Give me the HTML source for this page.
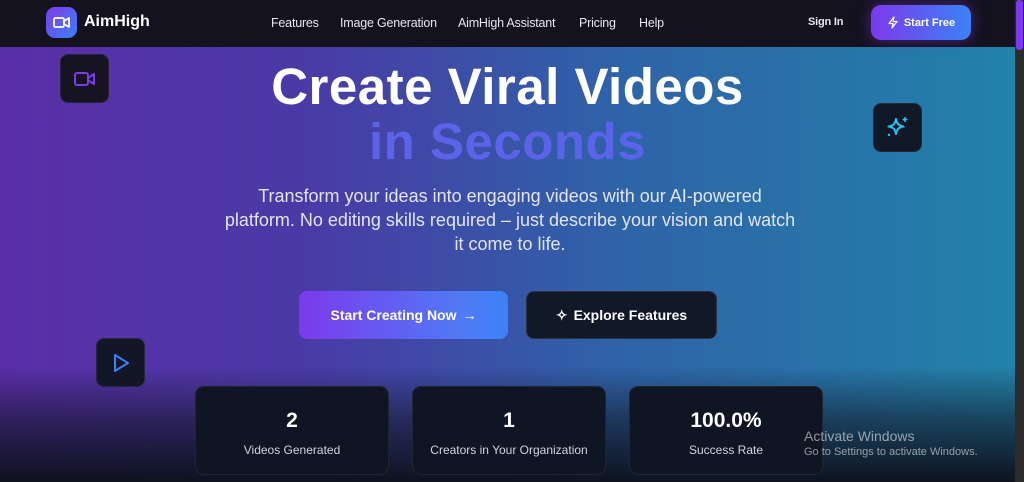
<!DOCTYPE html>
<html><head><meta charset="utf-8"><style>
*{margin:0;padding:0;box-sizing:border-box}
body{width:1024px;height:482px;overflow:hidden;font-family:"Liberation Sans",sans-serif;background:#0f1420;position:relative;color:#fff}
.bg{position:absolute;left:0;top:0;width:1015px;height:482px;background:linear-gradient(90deg,#5a2ea8 0%,#4a3aa6 30%,#2f62a8 60%,#2282a8 100%)}
.bg::after{content:"";position:absolute;left:0;right:0;bottom:0;height:115px;background:linear-gradient(180deg,rgba(15,20,32,0) 0%,rgba(15,20,32,0.55) 45%,#0e1320 100%)}
.sb{position:absolute;right:0;top:0;width:9px;height:482px;background:#2b2b2b}
.sb i{position:absolute;left:1px;top:0;width:7px;height:50px;background:#7c3aed;border-radius:3px}
nav{position:absolute;left:0;top:0;width:1015px;height:47px;background:#15121f}
.logo{position:absolute;left:46px;top:7px;width:31px;height:31px;border-radius:9px;background:linear-gradient(135deg,#7c3aed,#3b82f6)}
.brand{position:absolute;left:84px;top:13px;font-size:16px;font-weight:bold}
.nl{position:absolute;top:16px;font-size:12.5px;color:#e5e7eb;letter-spacing:-0.2px}
.sf{position:absolute;left:871px;top:5px;width:100px;height:35px;border-radius:10px;background:linear-gradient(90deg,#7c3aed,#3b82f6);font-size:11px;font-weight:bold;display:flex;align-items:center;justify-content:center;gap:5px;box-shadow:0 0 14px rgba(124,58,237,.5)}
.tile{position:absolute;width:49px;height:49px;border-radius:8px;background:#161423;display:flex;align-items:center;justify-content:center;border:1px solid rgba(255,255,255,.08)}
h1{position:absolute;left:0;width:1015px;text-align:center;top:57px;font-size:51px;font-weight:bold;line-height:60px;letter-spacing:.5px}
h1.b{top:112px;color:#5b63e8}
p.d{position:absolute;left:60px;width:900px;text-align:center;top:184px;font-size:18px;line-height:24px;color:#e2e5f0;white-space:nowrap}
.btn{position:absolute;top:291px;height:48px;border-radius:8px;font-size:14px;font-weight:bold;display:flex;align-items:center;justify-content:center;gap:6px}
.card{position:absolute;top:386px;width:194px;height:89px;border-radius:9px;background:#0f1522;border:1px solid rgba(255,255,255,.07);text-align:center}
.card b{display:block;margin-top:22px;font-size:21px}
.card span{display:block;margin-top:10px;font-size:12px;color:#d1d5db}
.aw{position:absolute;left:804px;top:428px;color:rgba(255,255,255,.55);font-size:14px}
.aw small{display:block;font-size:11px;margin-top:2px}
</style></head><body>
<div class="bg"></div>
<div class="sb"><i></i></div>
<nav>
<div class="logo"><svg width="31" height="31" viewBox="0 0 31 31"><rect x="8" y="11" width="10" height="9" rx="1.5" fill="none" stroke="#fff" stroke-width="1.8"/><path d="M18 14l5-3v9l-5-3z" fill="none" stroke="#fff" stroke-width="1.8" stroke-linejoin="round"/></svg></div>
<div class="brand">AimHigh</div>
<div class="nl" style="left:271px">Features</div>
<div class="nl" style="left:340px">Image Generation</div>
<div class="nl" style="left:458px">AimHigh Assistant</div>
<div class="nl" style="left:579px">Pricing</div>
<div class="nl" style="left:639px">Help</div>
<div class="nl" style="left:808px;font-size:11px;font-weight:bold;top:16px">Sign In</div>
<div class="sf"><svg width="12" height="13" viewBox="0 0 12 13"><path d="M7 1L2 7.5h4L5 12l5-6.5H6z" fill="none" stroke="#fff" stroke-width="1.2" stroke-linejoin="round"/></svg>Start Free</div>
</nav>
<div class="tile" style="left:60px;top:54px"><svg width="24" height="18" viewBox="0 0 24 18"><rect x="2" y="3" width="13" height="12" rx="2" fill="none" stroke="#7c3aed" stroke-width="2"/><path d="M15 8l6-4v10l-6-4z" fill="none" stroke="#7c3aed" stroke-width="2" stroke-linejoin="round"/></svg></div>
<div class="tile" style="left:873px;top:103px;background:#111827"><svg width="28" height="28" viewBox="0 0 28 28"><path d="M12 5c1 5 2.5 6.5 7.5 7.5-5 1-6.5 2.5-7.5 7.5-1-5-2.5-6.5-7.5-7.5 5-1 6.5-2.5 7.5-7.5z" fill="none" stroke="#22c5ee" stroke-width="2" stroke-linejoin="round"/><path d="M21 3v5M18.5 5.5h5" stroke="#22c5ee" stroke-width="1.6"/><circle cx="5" cy="21" r="1.2" fill="#22c5ee"/></svg></div>
<div class="tile" style="left:96px;top:338px;background:#131626"><svg width="20" height="22" viewBox="0 0 20 22"><path d="M4 3l13 8-13 8z" fill="none" stroke="#3b82f6" stroke-width="2" stroke-linejoin="round"/></svg></div>
<h1>Create Viral Videos</h1>
<h1 class="b">in Seconds</h1>
<p class="d">Transform your ideas into engaging videos with our AI-powered<br>platform. No editing skills required – just describe your vision and watch<br>it come to life.</p>
<div class="btn" style="left:299px;width:209px;background:linear-gradient(90deg,#7c3aed,#4f7bf5 80%,#3b82f6)">Start Creating Now <span style="font-weight:normal">→</span></div>
<div class="btn" style="left:526px;width:191px;background:#111827;border:1px solid rgba(255,255,255,.12)"><span>✧</span>Explore Features</div>
<div class="card" style="left:195px"><b>2</b><span>Videos Generated</span></div>
<div class="card" style="left:412px"><b>1</b><span>Creators in Your Organization</span></div>
<div class="card" style="left:629px"><b>100.0%</b><span>Success Rate</span></div>
<div class="aw">Activate Windows<small>Go to Settings to activate Windows.</small></div>
</body></html>
